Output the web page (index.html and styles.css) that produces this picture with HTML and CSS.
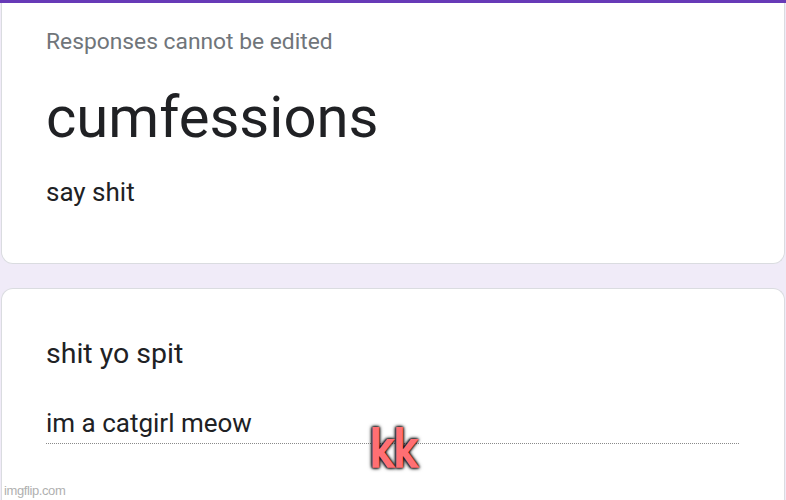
FILE: index.html
```html
<!DOCTYPE html>
<html>
<head>
<meta charset="utf-8">
<link rel="stylesheet" href="styles.css">
</head>
<body>
<div class="topbar"></div>
<div class="card card-head">
  <div class="note">Responses cannot be edited</div>
  <div class="title">cumfessions</div>
  <div class="desc">say shit</div>
</div>
<div class="card card-q">
  <div class="question">shit yo spit</div>
  <div class="answer">im a catgirl meow</div>
</div>
<div class="caption">kk</div>
<div class="watermark">imgflip.com</div>
</body>
</html>
```

FILE: styles.css
```css
html, body {
  margin: 0;
  padding: 0;
}
body {
  background: #f0ebf8;
  font-family: Roboto, "Noto Sans", sans-serif;
  color: #202124;
  width: 786px;
  height: 500px;
  overflow: hidden;
  position: relative;
}
.topbar {
  height: 3px;
  background: #673ab7;
}
.card {
  background: #fff;
  border: 1px solid #dadce0;
  margin: 0 1px;
  padding: 0 44px;
  box-sizing: border-box;
}
.card-head {
  border-top: none;
  border-radius: 0 0 12px 12px;
  height: 261px;
  padding-top: 25px;
}
.note {
  font-size: 22.8px;
  color: #70757a;
  line-height: 28px;
}
.title {
  font-size: 58px;
  line-height: 70px;
  margin-top: 26px;
}
.desc {
  font-size: 26px;
  line-height: 32px;
  margin-top: 24px;
}
.card-q {
  margin-top: 24px;
  border-radius: 12px 12px 0 0;
  border-bottom: none;
  height: 212px;
  padding-top: 48px;
  padding-right: 45px;
}
.question {
  font-size: 28.5px;
  line-height: 34px;
}
.answer {
  font-size: 26px;
  line-height: 32px;
  margin-top: 36px;
  border-bottom: 1px dotted #8a8a8a;
  padding-bottom: 4px;
}
.caption {
  position: absolute;
  left: 369px;
  top: 418px;
  font-family: "DejaVu Sans", sans-serif;
  font-weight: bold;
  font-size: 54px;
  line-height: 64px;
  color: #ff6f73;
  letter-spacing: -3px;
  transform: scaleX(0.72);
  transform-origin: left top;
  text-shadow: 0 0 3px #000, 0 0 3px #000, 0 0 5px #000;
}
.watermark {
  position: absolute;
  left: 4px;
  bottom: 2px;
  font-family: "Liberation Sans", sans-serif;
  font-size: 13px;
  color: #b0b0b0;
  letter-spacing: -0.4px;
}
```
